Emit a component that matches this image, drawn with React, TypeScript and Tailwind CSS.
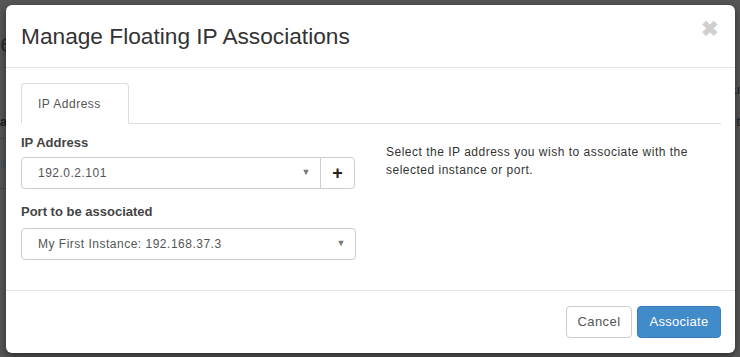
function SelectBox({ value, className }: { value: string; className: string }) {
  return (
    <div className={`flex items-center justify-between h-[32px] pl-4 pr-[9px] border border-[#cccccc] bg-white text-[12px] tracking-[0.5px] text-[#555555] ${className}`}>
      <span>{value}</span>
      <span className="text-[9px] text-[#777777]">▼</span>
    </div>
  );
}

export default function App() {
  return (
    <div className="relative w-[740px] h-[357px] bg-[#575757] overflow-hidden" style={{ fontFamily: '"Liberation Sans", Arial, sans-serif' }}>
      {/* faint page behind the backdrop */}
      <div className="absolute left-0 top-[24px] text-[26px] text-[#2e2e2e]">e</div>
      <div className="absolute left-0 top-[112px] text-[13px] font-bold text-[#1e1e1e]">a</div>
      <div className="absolute left-0 top-[154px] text-[12px] text-[#3a5068]">s</div>
      <div className="absolute left-0 top-[138px] w-[6px] h-px bg-[#4a4a4a]" />
      <div className="absolute left-0 top-[188px] w-[6px] h-px bg-[#4a4a4a]" />
      <div className="absolute right-0 top-[80px] text-[13px] text-[#222]">u</div>
      <div className="absolute right-0 top-[112px] text-[13px] text-[#222]">t</div>

      <div className="absolute left-[6px] top-[5px] w-[729px] h-[348px] bg-white rounded-[6px] flex flex-col shadow-[0_3px_9px_rgba(0,0,0,0.5)]">
        {/* header */}
        <div className="flex items-start justify-between h-[63px] border-b border-[#e5e5e5] pl-[15px] pr-[16px]">
          <h3 className="pt-[16px] text-[22.7px] leading-[30px] text-[#333333]">Manage Floating IP Associations</h3>
          <span className="pt-[11px] text-[21px] font-bold leading-[26px] text-[#cfcfcf]">✖</span>
        </div>

        {/* body */}
        <div className="flex-1 pt-[15px] px-[15px]">
          <div className="flex border-b border-[#dddddd] w-[700px]">
            <div className="-mb-px h-[41px] w-[108px] flex items-center pl-[16px] border border-b-white border-[#dddddd] rounded-t-[4px] bg-white text-[12px] tracking-[0.5px] text-[#555555]">
              IP Address
            </div>
          </div>

          <div className="flex mt-[10px]">
            <div className="w-[335px]">
              <div className="text-[13px] font-bold text-[#444444] leading-[18px]">IP Address</div>
              <div className="flex mt-[5px]">
                <SelectBox value="192.0.2.101" className="w-[300px] rounded-l-[4px]" />
                <div className="w-[35px] h-[32px] -ml-px flex items-center justify-center border border-[#cccccc] rounded-r-[4px] text-[18px] font-bold text-[#222222]">
                  +
                </div>
              </div>
              <div className="mt-[14px] text-[13px] font-bold text-[#444444] leading-[18px]">Port to be associated</div>
              <SelectBox value="My First Instance: 192.168.37.3" className="mt-[7px] w-[335px] rounded-[4px]" />
            </div>
            <p className="ml-[30px] mt-[9px] w-[330px] text-[12px] leading-[18px] tracking-[0.5px] text-[#333333]">
              Select the IP address you wish to associate with the selected instance or port.
            </p>
          </div>
        </div>

        {/* footer */}
        <div className="h-[63px] border-t border-[#e5e5e5] flex items-center justify-end gap-[5px] pr-[14px]">
          <button className="h-[32px] w-[66px] border border-[#cccccc] rounded-[4px] bg-white text-[13px] text-[#555555] tracking-[0.4px]">
            Cancel
          </button>
          <button className="h-[32px] w-[84px] border border-[#3a7fbd] rounded-[4px] bg-[#428bca] text-[13px] text-white tracking-[0.3px]">
            Associate
          </button>
        </div>
      </div>
    </div>
  );
}
